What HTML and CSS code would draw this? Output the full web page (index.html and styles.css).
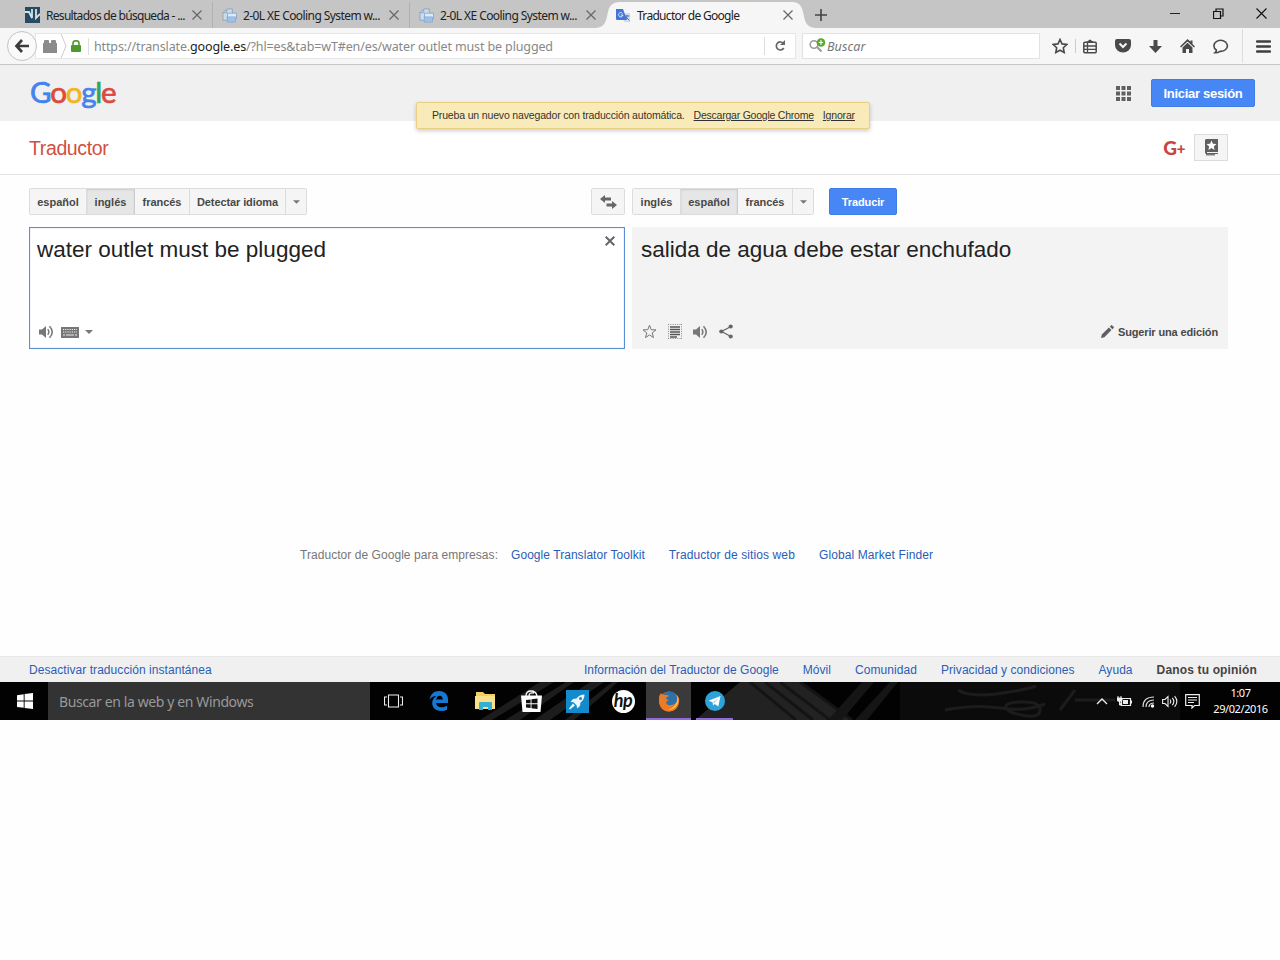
FILE: index.html
```html
<!DOCTYPE html>
<html lang="es">
<head>
  <meta charset="UTF-8">
  <meta name="viewport" content="width=device-width, initial-scale=1.0">
  <title>Traductor de Google</title>
  <link rel="stylesheet" href="styles.css">
</head>
<body>
  <svg class="defs" width="0" height="0">
    <symbol id="i-close" viewBox="0 0 12 12"><path d="M1.5 1.5l9 9M10.5 1.5l-9 9" stroke="#666" stroke-width="1.2" fill="none"/></symbol>
    <symbol id="i-doc" viewBox="0 0 16 16">
      <path d="M2 4l4-3h5v12H1V5z" fill="#c9dcec" stroke="#7c9cb8" stroke-width=".8"/>
      <path d="M1 5h4V1.500" fill="none" stroke="#7c9cb8" stroke-width=".8"/>
      <rect x="6" y="5.500" width="9.500" height="6" fill="#dceafa" stroke="#7b9dce" stroke-width=".8"/>
      <rect x="5.500" y="9.500" width="9" height="5.500" fill="#9fc0e8" stroke="#7b9dce" stroke-width=".6"/>
    </symbol>
    <symbol id="i-speaker" viewBox="0 0 15 14">
      <path d="M0 4.500h3L7 1v12L3 9.500H0z" fill="#777"/>
      <path d="M8.700 4.300q2.300 2.700 0 5.400M10.500 1.200q5.500 5.800 0 11.600" stroke="#777" stroke-width="1.500" fill="none"/>
    </symbol>
    <symbol id="i-caret" viewBox="0 0 8 4"><path d="M0 0h8L4 4z" fill="#777"/></symbol>
  </svg>

  <div class="tab-bar">
    <div class="tab">
      <svg width="15" height="16" viewBox="0 0 15 16"><rect width="15" height="16" fill="#244b63"/><path d="M0 5h4l3 6V2M11 2v9l4-4" stroke="#d5e0e6" stroke-width="1.800" fill="none"/></svg>
      <span class="tab-title t1">Resultados de búsqueda - ...</span>
      <svg class="tab-close"><use href="#i-close"/></svg>
    </div>
    <div class="tab">
      <svg width="15" height="15"><use href="#i-doc"/></svg>
      <span class="tab-title t2">2-0L XE Cooling System w...</span>
      <svg class="tab-close"><use href="#i-close"/></svg>
    </div>
    <div class="tab">
      <svg width="15" height="15"><use href="#i-doc"/></svg>
      <span class="tab-title t2">2-0L XE Cooling System w...</span>
      <svg class="tab-close"><use href="#i-close"/></svg>
    </div>
    <div class="tab active">
      <svg class="tab-shape" width="220" height="26" viewBox="0 0 220 26"><path d="M0 26C10 25 10 18 12 10Q14 0 23 0H197Q205 0 207 10C209 18 209 25 219 26z" fill="#f6f6f6"/></svg>
      <svg width="15" height="15" viewBox="0 0 15 15"><path d="M6 5h8v9H8z" fill="#d3dbe8"/><path d="M0 1h7l4 11H1q-1 0-1-1z" fill="#4376d8"/><path d="M6.500 5.300A2.200 2.200 0 1 0 7 7H4.800" fill="none" stroke="#e2ebff" stroke-width="1"/><path d="M8.500 8h5M11 7v1q0 3-2 4M10 9l3.500 3.500" stroke="#4d73b7" fill="none"/></svg>
      <span class="tab-title t3">Traductor de Google</span>
      <svg class="tab-close"><use href="#i-close"/></svg>
    </div>
    <svg class="new-tab" width="12" height="12" viewBox="0 0 12 12"><path d="M6 0v12M0 6h12" stroke="#444" stroke-width="1.600"/></svg>
    <div class="window-buttons">
      <svg width="11" height="11" viewBox="0 0 11 11"><path d="M0 5.500h10" stroke="#222"/></svg>
      <svg width="11" height="11" viewBox="0 0 11 11"><path d="M.5 3.500h7v7h-7zM3 3V1h7v7H8" stroke="#111" stroke-width="1.200" fill="none"/></svg>
      <svg width="11" height="11" viewBox="0 0 11 11"><path d="M.5.500l10 10M10.500.500l-10 10" stroke="#111" stroke-width="1.100"/></svg>
    </div>
  </div>

  <div class="nav-bar">
    <div class="back">
      <svg width="16" height="14" viewBox="0 0 16 14"><path d="M8 1L2.500 7 8 13M3 7h12" stroke="#3c3c3c" stroke-width="2.700" fill="none"/></svg>
    </div>
    <div class="url-bar">
      <svg width="14" height="13" viewBox="0 0 14 13"><path d="M0 3h1V1q0-1 1-1h3q1 0 1 1v2h2V1q0-1 1-1h3q1 0 1 1v2h1v10H0z" fill="#8b8b8b"/></svg>
      <svg class="chevron" width="8" height="24" viewBox="0 0 8 24"><path d="M1 0l5 12-5 12" stroke="#ccc" fill="none"/></svg>
      <svg class="lock" width="10" height="12" viewBox="0 0 10 12"><path d="M2 6V3.500a3 2.800 0 0 1 6 0V6" stroke="#4d9a2e" stroke-width="1.600" fill="none"/><rect y="5" width="10" height="7" rx="1" fill="#4d9a2e"/></svg>
      <span class="url">https://translate.<b>google.es</b>/?hl=es&amp;tab=wT#en/es/water outlet must be plugged</span>
      <span class="reload"><svg width="12" height="12" viewBox="0 0 12 12"><path d="M9.500 3.500A4 4 0 1 0 9.800 8" stroke="#666" stroke-width="1.700" fill="none"/><path d="M11 0v5H6z" fill="#666"/></svg></span>
    </div>
    <div class="search-bar">
      <svg width="17" height="16" viewBox="0 0 17 16"><circle cx="5" cy="6.500" r="3.800" stroke="#999" stroke-width="1.500" fill="none"/><path d="M8 9l4.500 4.500" stroke="#999" stroke-width="2"/><circle cx="12" cy="4.500" r="4.300" fill="#57ad2b"/><path d="M12 2.300v4.400M9.800 4.500h4.400" stroke="#fff" stroke-width="1.200"/></svg>
      <span class="search-text">Buscar</span>
    </div>
    <div class="nav-icons">
      <svg width="16" height="16" viewBox="0 0 16 16"><path d="M8 1.500l2 4.400 4.800.600-3.500 3.200.900 4.800L8 12.200l-4.200 2.300.900-4.800L1.200 6.500 6 5.900z" stroke="#4a4a4a" stroke-width="1.600" fill="none"/></svg>
      <i class="divider"></i>
      <svg width="14" height="15" viewBox="0 0 14 15"><rect x=".8" y="3.300" width="12.400" height="10.400" rx="1" stroke="#4a4a4a" stroke-width="1.500" fill="none"/><path d="M1 7h12M1 10.300h12M4.500 4v9" stroke="#4a4a4a" stroke-width="1.300"/><path d="M3 3l2-1q2-3 4 0l2 1z" fill="#4a4a4a"/></svg>
      <svg width="16" height="14" viewBox="0 0 16 14"><path d="M2 0h12q2 0 2 2v4a8 7.500 0 0 1-16 0V2q0-2 2-2z" fill="#4a4a4a"/><path d="M4.500 4.500L8 8l3.500-3.500" stroke="#f6f6f6" stroke-width="2" fill="none"/></svg>
      <svg width="13" height="13" viewBox="0 0 13 13"><path d="M4.500 0h4v6H13l-6.500 7L0 6h4.500z" fill="#4a4a4a"/></svg>
      <svg width="15" height="14" viewBox="0 0 15 14"><path d="M7.500 0l3 2.800V1.500h2V5L15 7.500l-1 1-6.500-6-6.500 6-1-1z" fill="#4a4a4a"/><path d="M2.500 8.500l5-4.700 5 4.700V14H9v-4H6v4H2.500z" fill="#4a4a4a"/></svg>
      <svg width="16" height="15" viewBox="0 0 16 15"><path d="M3.300 11A6.700 5.500 0 1 1 7 12.300Q4.500 14 2 13.700 3.600 12.500 3.300 11z" stroke="#4a4a4a" stroke-width="1.600" fill="none"/></svg>
      <i class="divider tall"></i>
      <svg width="15" height="13" viewBox="0 0 15 13"><path d="M1 1.500h13M1 6.500h13M1 11.500h13" stroke="#3f3f3f" stroke-width="2.500" stroke-linecap="round"/></svg>
    </div>
  </div>

  <header class="google-bar">
    <div class="logo"><span class="blue">G</span><span class="red">o</span><span class="yellow">o</span><span class="blue">g</span><span class="green">l</span><span class="red">e</span></div>
    <div class="google-actions">
      <svg width="15" height="15" viewBox="0 0 15 15"><path d="M0 2h15M0 7.500h15M0 13h15" stroke="#606060" stroke-width="4" stroke-dasharray="4 1.500"/></svg>
      <button class="blue-btn sign-in"><span>Iniciar sesión</span></button>
    </div>
    <div class="promo">
      <span class="promo-text">Prueba un nuevo navegador con traducción automática.</span>
      <a class="promo-link">Descargar Google Chrome</a>
      <a class="promo-skip">Ignorar</a>
    </div>
  </header>

  <div class="title-bar">
    <h1>Traductor</h1>
    <div class="title-actions">
      <span class="gplus">G<b>+</b></span>
      <button class="phrasebook"><svg width="13" height="17" viewBox="0 0 13 17"><path d="M1 0h12v13H2v1h11v1H1q-1 0-1-2V1z" fill="#606060"/><path d="M1 15.800h9" stroke="#606060" stroke-width="1.200"/><path d="M6.500 1.500l1.400 3.300 3.600.3-2.700 2.300.8 3.500-3.100-1.800-3.100 1.800.8-3.500-2.700-2.300 3.600-.3z" fill="#fff"/></svg></button>
    </div>
  </div>

  <main>
    <section class="source">
      <div class="toolbar">
        <div class="langs">
          <button class="w57"><span class="l-es">español</span></button>
          <button class="w48 selected"><span class="l-en">inglés</span></button>
          <button class="w55"><span class="l-fr">francés</span></button>
          <button class="w96"><span class="l-det">Detectar idioma</span></button>
          <button class="arrow"><svg width="7" height="4"><use href="#i-caret"/></svg></button>
        </div>
        <button class="swap"><svg width="17" height="14" viewBox="0 0 17 14"><path d="M0 4l5-4v2.500h6v3H5V8zM17 10l-5-4v2.500H6.500v3H12V14z" fill="#666"/></svg></button>
      </div>
      <div class="source-box">
        <div class="box-top">
          <p class="src-text">water outlet must be plugged</p>
          <svg width="10" height="10" viewBox="0 0 10 10"><path d="M.7.700l8.600 8.600M9.300.700L.7 9.300" stroke="#666" stroke-width="2"/></svg>
        </div>
        <div class="box-icons">
          <svg width="15" height="14"><use href="#i-speaker"/></svg>
          <svg class="keyboard" width="18" height="11" viewBox="0 0 18 11"><rect width="18" height="11" fill="#777"/><path d="M2 2.500h14M2 5h14" stroke="#eee" stroke-width="1.200" stroke-dasharray="1.200 1"/><path d="M2 8h2M5 8h8M14 8h2" stroke="#eee" stroke-width="1.200"/></svg>
          <svg class="small-caret" width="8" height="4"><use href="#i-caret"/></svg>
        </div>
      </div>
    </section>

    <section class="target">
      <div class="toolbar">
        <div class="langs">
          <button class="w48"><span class="l-en">inglés</span></button>
          <button class="w57 selected"><span class="l-es">español</span></button>
          <button class="w55"><span class="l-fr">francés</span></button>
          <button class="arrow"><svg width="7" height="4"><use href="#i-caret"/></svg></button>
        </div>
        <button class="blue-btn translate"><span>Traducir</span></button>
      </div>
      <div class="target-box">
        <p class="dst-text">salida de agua debe estar enchufado</p>
        <div class="box-icons">
          <svg width="15" height="15" viewBox="0 0 15 15"><path d="M7.500 1.200l1.700 4.500 4.800.200-3.800 3 1.300 4.700-4-2.700-4 2.700 1.300-4.700L1 5.900l4.800-.200z" stroke="#777" fill="none"/></svg>
          <svg class="select-all" width="14" height="15" viewBox="0 0 14 15"><path d="M.5 0v15M13.500 0v15M0 .5h14M0 14.500h14" stroke="#888" stroke-dasharray="1 1.300"/><path d="M2 3h10M2 5.500h10M2 8h10M2 10.500h10M2 13h7" stroke="#555" stroke-width="1.500"/></svg>
          <svg class="listen" width="15" height="14"><use href="#i-speaker"/></svg>
          <svg class="share" width="14" height="15" viewBox="0 0 14 15"><path d="M12 2.500L2.500 7.500l9.500 5" stroke="#666" stroke-width="1.300" fill="none"/><circle cx="11.700" cy="2.500" r="2.100" fill="#666"/><circle cx="2.300" cy="7.500" r="2.100" fill="#666"/><circle cx="11.700" cy="12.500" r="2.100" fill="#666"/></svg>
          <div class="suggest">
            <svg width="13" height="13" viewBox="0 0 13 13"><path d="M0 13l.8-3.400L7.900 2.500l2.600 2.600-7.100 7.100zM8.800 1.600L10 .4q.6-.6 1.200 0l1.400 1.400q.6.600 0 1.200l-1.200 1.200z" fill="#606060"/></svg>
            <span>Sugerir una edición</span>
          </div>
        </div>
      </div>
    </section>
  </main>

  <div class="business">
    <span class="b1">Traductor de Google para empresas:</span>
    <a class="b2">Google Translator Toolkit</a>
    <a class="b3">Traductor de sitios web</a>
    <a class="b4">Global Market Finder</a>
  </div>

  <footer>
    <a class="f1">Desactivar traducción instantánea</a>
    <a class="f2">Información del Traductor de Google</a>
    <a class="f3">Móvil</a>
    <a class="f4">Comunidad</a>
    <a class="f5">Privacidad y condiciones</a>
    <a class="f6">Ayuda</a>
    <a class="f7">Danos tu opinión</a>
  </footer>

  <div class="taskbar">
    <svg class="wallpaper" width="1280" height="38" viewBox="0 0 1280 38">
      <path d="M480 38L540 0h14L492 38zM505 38L566 0h8L520 38zM534 38L590 0h14L550 38zM565 38L612 0h6L574 38z" fill="#1c1c1c"/>
      <path d="M695 38L740 0h60l50 38z" fill="#222"/>
      <path d="M750 0l46 38M765 0l48 38M780 0l50 38M800 0l52 38" stroke="#141414" stroke-width="3"/>
      <path d="M828 38L862 0h12L842 38zM855 38L890 0h8L867 38z" fill="#151515"/>
      <path d="M900 38V0h280v38z" fill="#0b0b0c"/>
      <path d="M958 8q10 7 38 4 30-4 40-8M945 28q30-6 55-2t45-4M1010 30q-12-9 10-10t20 9-30 1M1060 28l15-20M1075 18h40" stroke="#1c1c1d" stroke-width="3" fill="none"/>
    </svg>
    <div class="start"><svg width="16" height="16" viewBox="0 0 16 16"><path d="M0 2.200L6.700 1.300V7.600H0zM7.600 1.100L16 0v7.600H7.600zM0 8.500h6.700v6.300L0 13.900zM7.600 8.500H16V16l-8.400-1.100z" fill="#fff"/></svg></div>
    <div class="cortana"><span>Buscar en la web y en Windows</span></div>
    <div class="apps">
      <div class="app"><svg width="19" height="14" viewBox="0 0 19 14"><path d="M4.500 1h10v12h-10zM3 3H.500v8H3M16 3h2.500v8H16" stroke="#eee" stroke-width="1.100" fill="none"/></svg></div>
      <div class="app"><svg width="20" height="20" viewBox="0 0 20 20"><path d="M.5 9C1.500 3 5 0 10.200 0 16 0 19 4 19 8.500V12H7c.3 3 3 4.400 6 4.200 2 0 3.700-.600 5-1.500v4C16.500 19.600 14.500 20 12.500 20 7 20 3.200 17 3.200 12c0-3 1.700-5.600 4.300-7C4 5 2 6.500.5 9zm6.700-.4h6.600C13.700 6 12.500 4.700 10.700 4.700 8.800 4.700 7.500 6.300 7.200 8.600z" fill="#1479d4"/></svg></div>
      <div class="app"><svg width="21" height="18" viewBox="0 0 21 18"><path d="M1 0h7l2 2h10v14H1z" fill="#f3ce61"/><path d="M0 4h20v13H0z" fill="#fbe08a"/><path d="M4 18V11q0-1 1-1h11q1 0 1 1v7h-4v-3H8v3z" fill="#35b0d4"/></svg></div>
      <div class="app"><svg width="21" height="22" viewBox="0 0 21 22"><path d="M5 6q0-5 5-5t6 5M8 6q0-4 5-3" stroke="#fff" stroke-width="1.300" fill="none"/><path d="M0 5.500h21L19.500 22h-18z" fill="#fff"/><path d="M5 10l4.600-.6v3.800H5zM10.500 9.200l6-.8v4.800h-6zM5 14.200h4.600V18L5 17.400zM10.500 14.200h6V19l-6-.8z" fill="#111"/></svg></div>
      <div class="app"><svg width="23" height="23" viewBox="0 0 23 23"><rect width="23" height="23" fill="#138acb"/><path d="M18.500 4.500q-5 0-8 4L7 9l-2.500 3 3 .300 3.200 3.200.3 3 3-2.500.5-3.500q4-3 4-8z" fill="#e9f6ff"/><circle cx="14.500" cy="8.500" r="1.500" fill="#138acb"/><path d="M7.500 14l-4 5 5-4" stroke="#e9f6ff" stroke-width="1.500" fill="none"/></svg></div>
      <div class="app"><div class="hp">hp</div></div>
      <div class="app running firefox"><svg width="22" height="21" viewBox="0 0 22 21"><circle cx="11" cy="10.500" r="10" fill="#e4762b"/><circle cx="11.500" cy="8.500" r="8" fill="#2d71a8"/><path d="M1 8Q1 4 3 2q1 2 3 2 3-1 5 1-3 1-3 3l3 1-3 2q1 4 5 3 4 0 5-3 1 3-1 5 3-3 3-8-1-3-3-5 5 3 4 8-1 9-10 9.500Q1 20 1 8z" fill="#ee7a23"/><path d="M19 4q3 5 0 10-3 5-9 5 5-2 7-5 3-4 2-10z" fill="#f8c13b"/></svg></div>
      <div class="app running telegram"><svg width="20" height="20" viewBox="0 0 20 20"><circle cx="10" cy="10" r="10" fill="#2ea2d9"/><path d="M3.500 9.800L15.500 5l-2.200 10.500-3.600-2.600L8 14.500l-.4-3.200z" fill="#fff"/><path d="M7.600 11.300L13.500 7l-4 5" fill="#b8d5e8"/></svg></div>
    </div>
    <div class="tray">
      <svg width="12" height="8" viewBox="0 0 12 8"><path d="M1 7l5-5 5 5" stroke="#eee" stroke-width="1.300" fill="none"/></svg>
      <svg class="battery" width="15" height="11" viewBox="0 0 15 11"><path d="M4.500 2.500h9v7h-9zM14.500 4.500v3" stroke="#eee" stroke-width="1.200" fill="none"/><path d="M6 4h5v4H6z" fill="#eee"/><path d="M0 2h5v2.500q-2.500 2-5 0zM1 0v2M4 0v2M2.500 5v4H5" fill="#eee" stroke="#eee"/></svg>
      <svg class="wifi" width="13" height="13" viewBox="0 0 13 13"><path d="M1 12Q1 2 12 2M4 12q0-7 8-7M7 12q0-4 5-4" stroke="#ddd" stroke-width="1.200" fill="none"/><circle cx="10.500" cy="11" r="1.700" fill="#fff"/></svg>
      <svg class="volume" width="16" height="13" viewBox="0 0 16 13"><path d="M.6 4.500H3l3-3v10l-3-3H.600zM8 4.500q1.500 2 0 4M10.300 2.800q3 3.700 0 7.400M12.600 1.200q4.500 5.300 0 10.600" stroke="#eee" stroke-width="1.100" fill="none"/></svg>
      <svg class="notes" width="15" height="15" viewBox="0 0 15 15"><path d="M.7.700h13.600v10.800H9.500l-2.500 2.500v-2.500H.7zM3 3.500h9M3 6h9M3 8.500h6" stroke="#eee" stroke-width="1.200" fill="none"/></svg>
      <div class="clock"><span class="time">1:07</span><span class="date">29/02/2016</span></div>
    </div>
  </div>
</body>
</html>
```
FILE: styles.css
```css
* {
  box-sizing: border-box;
}

body {
  margin: 0;
  background: #fefefe;
  font-family: "Liberation Sans", Arial, sans-serif;
  color: #222;
}

svg {
  display: block;
  flex: none;
}

span, a, h1, p {
  white-space: nowrap;
}

.defs {
  position: absolute;
}

/* Browser tabs */
.tab-bar {
  display: flex;
  align-items: center;
  height: 28px;
  padding: 2px 13px 0 16px;
  background: #c5c5c5;
  font-family: "Noto Sans", "Open Sans", sans-serif;
  font-size: 12px;
  color: #222;
}

.tab {
  position: relative;
  display: flex;
  align-items: center;
  width: 197px;
  height: 26px;
  padding: 0 9px;
  border-right: 1px solid #b0b0b0;
}

.tab:nth-child(3),
.tab.active {
  border-right-color: transparent;
}

.tab-title {
  position: relative;
  flex: 1;
  margin-left: 6px;
}

.tab.active svg {
  position: relative;
}

.tab.active .tab-shape {
  position: absolute;
  left: -11px;
  top: 0;
}

.tab-close {
  width: 12px;
  height: 12px;
}

.t1 { letter-spacing: -0.7px; }
.t2 { letter-spacing: -0.58px; }
.t3 { letter-spacing: -0.7px; }

.new-tab {
  margin-left: 11px;
}

.window-buttons {
  display: flex;
  gap: 32px;
  margin-left: auto;
  margin-bottom: 4px;
}

/* Navigation bar */
.nav-bar {
  display: flex;
  align-items: center;
  height: 37px;
  padding-left: 7px;
  background: #f6f6f6;
  border-bottom: 1px solid #c6c6c6;
  font-family: "Noto Sans", "Open Sans", sans-serif;
  font-size: 13px;
}

.back {
  position: relative;
  display: flex;
  align-items: center;
  justify-content: center;
  width: 30px;
  height: 30px;
  border: 1px solid #c4c4c4;
  border-radius: 50%;
  background: #fafafa;
}

.url-bar {
  display: flex;
  align-items: center;
  width: 761px;
  height: 26px;
  margin-left: -2px;
  padding-left: 7px;
  background: #fff;
  border: 1px solid #e6e6e6;
}

.chevron {
  margin-left: 3px;
}

.lock {
  margin-left: 3px;
}

.url {
  flex: 1;
  margin-left: 7px;
  padding-left: 5px;
  border-left: 1px solid #ddd;
  color: #888;
  font-size: 12.5px;
  letter-spacing: -0.13px;
}

.url b {
  color: #222;
  font-weight: 400;
}

.reload {
  display: flex;
  align-items: center;
  justify-content: center;
  width: 31px;
  height: 18px;
  border-left: 1px solid #ddd;
}

.search-bar {
  display: flex;
  align-items: center;
  width: 238px;
  height: 26px;
  margin-left: 6px;
  padding-left: 6px;
  background: #fff;
  border: 1px solid #e2e2e2;
}

.search-text {
  margin: 1px 0 0 1px;
  font-style: italic;
  font-size: 12.5px;
  letter-spacing: 0.1px;
  color: #777;
}

.nav-icons {
  display: flex;
  flex: 1;
  align-items: center;
  justify-content: space-between;
  height: 36px;
  padding: 0 9px 0 12px;
}

.divider {
  width: 1px;
  height: 14px;
  margin: 0 -11px;
  background: #ccc;
}

.divider.tall {
  height: 34px;
  margin: 0 -5px;
  background: #ddd;
}

/* Google header */
.google-bar {
  position: relative;
  display: flex;
  align-items: center;
  justify-content: space-between;
  height: 56px;
  padding: 0 25px 0 30px;
  background: #f0f0f0;
}

.logo {
  margin-bottom: 3px;
  font-family: Lato, sans-serif;
  font-size: 29.5px;
  letter-spacing: -1.2px;
  -webkit-text-stroke: 0.7px currentColor;
}

.blue { color: #4383ee; -webkit-text-stroke-color: #4383ee; }
.red { color: #dc493e; -webkit-text-stroke-color: #dc493e; }
.yellow { color: #efb622; -webkit-text-stroke-color: #efb622; }
.green { color: #36a255; -webkit-text-stroke-color: #36a255; }

.google-actions {
  display: flex;
  align-items: center;
  gap: 20px;
}

button {
  display: flex;
  align-items: center;
  justify-content: center;
  padding: 0;
  font-family: inherit;
  font-weight: bold;
  font-size: 11px;
  color: #484848;
  background: #f5f5f5;
  border: 1px solid #dcdcdc;
}

.blue-btn {
  background: #4787f5;
  border-color: #3f7ce6;
  border-radius: 2px;
  color: #fff;
}

.sign-in {
  width: 104px;
  height: 28px;
  font-size: 13px;
  letter-spacing: -0.3px;
}

.promo {
  position: absolute;
  left: 416px;
  top: 37px;
  display: flex;
  align-items: center;
  width: 454px;
  height: 27px;
  padding: 0 0 1px 15px;
  background: #f9ebb9;
  border: 1px solid #ebcf83;
  border-radius: 2px;
  box-shadow: 0 2px 4px rgba(0, 0, 0, 0.2);
  font-size: 10.5px;
  letter-spacing: -0.16px;
  color: #333;
}

.promo a {
  margin-left: 9px;
  text-decoration: underline;
}

.promo .promo-link {
  letter-spacing: -0.23px;
}

/* Title */
.title-bar {
  display: flex;
  align-items: center;
  justify-content: space-between;
  height: 54px;
  padding: 0 52px 0 29px;
  background: #fff;
  border-bottom: 1px solid #e5e5e5;
}

h1 {
  margin: 1px 0 0;
  font-size: 19.5px;
  font-weight: 400;
  letter-spacing: -0.38px;
  color: #d0503f;
}

.title-actions {
  display: flex;
  align-items: center;
  gap: 9px;
}

.gplus {
  display: flex;
  align-items: center;
  font-family: Lato, sans-serif;
  font-size: 19px;
  font-weight: 900;
  line-height: 20px;
  letter-spacing: -0.4px;
  color: #c94340;
}

.gplus b {
  font-size: 15px;
}

.phrasebook {
  width: 34px;
  height: 27px;
}

/* Translator panels */
main {
  display: flex;
  gap: 7px;
  padding: 13px 0 0 29px;
}

.source {
  width: 596px;
}

.target {
  width: 596px;
}

.toolbar {
  display: flex;
  height: 27px;
  margin-bottom: 12px;
}

.langs {
  display: flex;
  border: 1px solid #dcdcdc;
  border-radius: 2px;
}

.langs button {
  border-width: 0 1px 0 0;
}

.langs .selected {
  background: #e6e6e6;
  border-color: #ccc;
  box-shadow: inset 0 1px 2px rgba(0, 0, 0, 0.12);
}

.langs .arrow {
  width: 20px;
  border-right: 0;
}

.w48 { width: 48px; }
.w55 { width: 55px; }
.w57 { width: 57px; }
.w96 { width: 96px; }

.l-fr {
  letter-spacing: -0.05px;
}

.l-det {
  letter-spacing: -0.1px;
}

.swap {
  width: 34px;
  margin-left: auto;
  border-radius: 2px;
}

.translate {
  width: 68px;
  margin-left: 15px;
  letter-spacing: -0.1px;
}

.source-box,
.target-box {
  display: flex;
  flex-direction: column;
  justify-content: space-between;
  height: 122px;
}

.source-box {
  padding: 8px 9px 8px 7px;
  background: #fff;
  border: 1px solid #5a8fd6;
  box-shadow: inset 0 0 1px #5a8fd6;
}

.target-box {
  padding: 9px 10px 9px 9px;
  background: #f3f3f3;
}

.box-top {
  display: flex;
  justify-content: space-between;
}

.src-text,
.dst-text {
  margin: 0;
  font-size: 22.5px;
  line-height: 28px;
}

.box-icons {
  display: flex;
  align-items: center;
  height: 17px;
  padding-left: 2px;
}

.target-box .box-icons {
  padding-left: 1px;
}

.keyboard { margin: 1px 0 0 7px; }
.small-caret { margin-left: 6px; }
.select-all { margin-left: 11px; }
.listen { margin-left: 11px; }
.share { margin-left: 11px; }

.suggest {
  display: flex;
  align-items: center;
  gap: 4px;
  margin-left: auto;
  font-size: 11px;
  font-weight: bold;
  letter-spacing: -0.14px;
  color: #484848;
}

.business {
  display: flex;
  height: 307px;
  padding: 199px 0 0 300px;
  font-size: 12px;
  line-height: 15px;
  color: #777;
}

.business a,
footer a {
  color: #2a5db8;
}

.b1 { letter-spacing: 0.05px; }
.b2 { margin-left: 13px; letter-spacing: 0.05px; }
.b3, .b4 { margin-left: 24px; letter-spacing: 0.11px; }

footer {
  display: flex;
  align-items: center;
  height: 26px;
  padding: 1px 23px 0 29px;
  background: #f0f0f0;
  border-top: 1px solid #e8e8e8;
  font-size: 12px;
  letter-spacing: 0.06px;
}

.f2 { margin-left: auto; letter-spacing: 0; }
.f3, .f4, .f5, .f6, .f7 { margin-left: 24px; }

footer .f7 {
  font-weight: bold;
  letter-spacing: 0.15px;
  color: #444;
}

/* Taskbar */
.taskbar {
  position: relative;
  display: flex;
  height: 38px;
  background: #020202;
  color: #fff;
  font-family: "Noto Sans", "Open Sans", sans-serif;
}

.wallpaper {
  position: absolute;
  left: 0;
  top: 0;
}

.start {
  display: flex;
  align-items: center;
  justify-content: center;
  width: 48px;
  padding-left: 2px;
}

.cortana {
  position: relative;
  display: flex;
  align-items: center;
  width: 322px;
  padding-left: 11px;
  background: #333;
  color: #999;
  font-size: 14px;
  letter-spacing: -0.39px;
}

.apps {
  position: relative;
  display: flex;
}

.app {
  display: flex;
  align-items: center;
  justify-content: center;
  width: 46px;
}

.running {
  border-bottom: 2px solid #8d6cd9;
  padding-top: 2px;
}

.firefox {
  background: #3a3a3a;
  width: 45px;
}

.telegram {
  width: 37px;
  margin-left: 5px;
}

.hp {
  width: 23px;
  height: 23px;
  border-radius: 50%;
  background: #fff;
  color: #111;
  font-family: Lato, sans-serif;
  font-size: 18px;
  font-style: italic;
  font-weight: 700;
  line-height: 20px;
  text-align: center;
  letter-spacing: -0.5px;
}

.tray {
  position: relative;
  display: flex;
  align-items: center;
  margin-left: auto;
  padding-right: 12px;
}

.battery { margin-left: 9px; }
.wifi { margin-left: 10px; }
.volume { margin-left: 7px; }
.notes { margin-left: 7px; }

.clock {
  display: flex;
  flex-direction: column;
  align-items: center;
  width: 55px;
  margin-left: 13px;
  font-size: 11px;
  line-height: 16px;
  letter-spacing: -0.4px;
}
```
